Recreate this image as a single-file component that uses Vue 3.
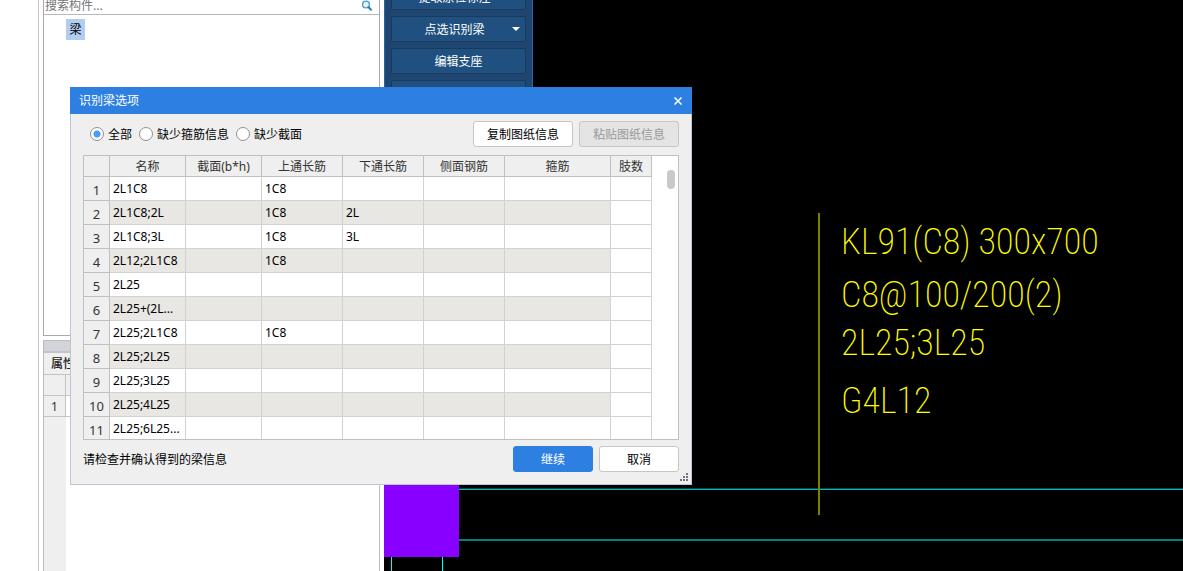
<script setup>
import { ref } from 'vue'

const tools = [
  { label: '提取原位标注', menu: true },
  { label: '点选识别梁', menu: true },
  { label: '编辑支座', menu: false },
  { label: '', menu: false }
]

const filters = [
  { value: 'all', label: '全部' },
  { value: 'stirrup', label: '缺少箍筋信息' },
  { value: 'section', label: '缺少截面' }
]
const filter = ref('all')

const columns = ['名称', '截面(b*h)', '上通长筋', '下通长筋', '侧面钢筋', '箍筋', '肢数']
const rows = [
  ['2L1C8', '', '1C8', '', '', '', ''],
  ['2L1C8;2L', '', '1C8', '2L', '', '', ''],
  ['2L1C8;3L', '', '1C8', '3L', '', '', ''],
  ['2L12;2L1C8', '', '1C8', '', '', '', ''],
  ['2L25', '', '', '', '', '', ''],
  ['2L25+(2L...', '', '', '', '', '', ''],
  ['2L25;2L1C8', '', '1C8', '', '', '', ''],
  ['2L25;2L25', '', '', '', '', '', ''],
  ['2L25;3L25', '', '', '', '', '', ''],
  ['2L25;4L25', '', '', '', '', '', ''],
  ['2L25;6L25...', '', '', '', '', '', '']
]
</script>

<template>
  <div class="app">
    <aside class="side">
      <section class="tree">
        <div class="search">
          <input type="text" placeholder="搜索构件..." aria-label="搜索构件" />
          <svg width="12" height="12" viewBox="0 0 12 12" aria-hidden="true">
            <circle cx="5" cy="4.5" r="3.4" fill="#e4f3fb" stroke="#4a9cc9" stroke-width="1.4" />
            <path d="M7.4 7 L10 9.8" stroke="#2f7fb5" stroke-width="2" stroke-linecap="round" />
          </svg>
        </div>
        <span class="node">梁</span>
      </section>
      <section class="props">
        <div class="splitter"></div>
        <h2>属性</h2>
        <div class="prop-row"><span></span></div>
        <div class="prop-row"><span>1</span></div>
        <div class="prop-fill"></div>
      </section>
    </aside>

    <main class="canvas">
      <nav class="tools">
        <button v-for="(t, i) in tools" :key="i" type="button" :class="{ split: t.menu }">
          {{ t.label }}
          <i v-if="t.menu" class="caret"></i>
        </button>
      </nav>
      <div class="column"></div>
      <div class="beam beam-top"></div>
      <div class="beam beam-bottom"></div>
      <div class="axis axis-a"></div>
      <div class="axis axis-b"></div>
      <div class="leader"></div>
      <p class="note note-1">KL91(C8) 300x700</p>
      <p class="note note-2">C8@100/200(2)</p>
      <p class="note note-3">2L25;3L25</p>
      <p class="note note-4">G4L12</p>
    </main>

    <div class="dialog" role="dialog" aria-labelledby="dialog-title">
      <header>
        <h1 id="dialog-title">识别梁选项</h1>
        <button type="button" aria-label="关闭">
          <svg width="10" height="8" viewBox="0 0 10 8" aria-hidden="true">
            <path d="M1.5 0.5 L8.5 7.5 M8.5 0.5 L1.5 7.5" stroke="#fff" stroke-width="1.5" />
          </svg>
        </button>
      </header>
      <div class="body">
        <div class="bar">
          <div class="filters">
            <label v-for="f in filters" :key="f.value">
              <input v-model="filter" type="radio" name="filter" :value="f.value" />
              <span>{{ f.label }}</span>
            </label>
          </div>
          <button type="button" class="btn wide">复制图纸信息</button>
          <button type="button" class="btn wide" disabled>粘贴图纸信息</button>
        </div>
        <div class="grid">
          <table>
            <colgroup>
              <col class="c-no" />
              <col class="c-name" />
              <col class="c-name" />
              <col class="c-bar" />
              <col class="c-bar" />
              <col class="c-bar" />
              <col class="c-hoop" />
              <col class="c-leg" />
            </colgroup>
            <thead>
              <tr>
                <th></th>
                <th v-for="c in columns" :key="c" scope="col">{{ c }}</th>
              </tr>
            </thead>
            <tbody>
              <tr v-for="(row, i) in rows" :key="i">
                <th scope="row">{{ i + 1 }}</th>
                <td v-for="(cell, j) in row" :key="j">{{ cell }}</td>
              </tr>
            </tbody>
          </table>
          <div class="track"><div class="thumb"></div></div>
        </div>
        <footer>
          <p>请检查并确认得到的梁信息</p>
          <button type="button" class="btn primary">继续</button>
          <button type="button" class="btn">取消</button>
        </footer>
      </div>
      <svg class="grip" width="8" height="8" viewBox="0 0 8 8" aria-hidden="true">
        <path d="M6 0h2v2h-2z M3 3h2v2h-2z M6 3h2v2h-2z M0 6h2v2h-2z M3 6h2v2h-2z M6 6h2v2h-2z" fill="#6f7480" />
      </svg>
    </div>
  </div>
</template>

<style>
body {
  margin: 0;
  background: #fff;
}
</style>

<style scoped>
.app {
  position: relative;
  display: flex;
  height: 100vh;
  overflow: hidden;
  font: 12px/16px "Noto Sans", "Noto Sans CJK SC", sans-serif;
  color: #000;
}
.app * {
  box-sizing: border-box;
}
button,
input {
  font: inherit;
  margin: 0;
}
h1,
h2,
p {
  margin: 0;
  font-size: 12px;
  font-weight: 400;
}

.side {
  flex: none;
  display: flex;
  flex-direction: column;
  width: 342px;
  margin-left: 38px;
  margin-right: 4px;
  padding-left: 4px;
  border-left: 1px solid #c4c4c8;
}
.tree {
  height: 336px;
  border: 1px solid #a9a9ab;
  border-top: 0;
}
.search {
  display: flex;
  align-items: flex-end;
  height: 15px;
  padding-right: 6px;
  border-bottom: 1px solid #b9b9bb;
}
.search input {
  flex: 1;
  min-width: 0;
  height: 18px;
  padding: 0 1px;
  border: 0;
  outline: 0;
  background: none;
}
.search input::placeholder {
  color: #757575;
  opacity: 1;
}
.search svg {
  margin-bottom: 2px;
}
.node {
  display: block;
  width: 19px;
  margin: 4px 22px;
  line-height: 21px;
  text-align: center;
  background: #b1cdf0;
}
.props {
  flex: 1;
  display: flex;
  flex-direction: column;
  margin-top: 4px;
  border: 1px solid #bcbcc0;
  border-bottom: 0;
}
.splitter {
  height: 12px;
  background: #d3d4da;
  border-bottom: 2px solid #c3c4ca;
}
.props h2 {
  height: 22px;
  padding-left: 7px;
  line-height: 21px;
  font-weight: 500;
  color: #222;
  background: #efefef;
  border-bottom: 1px solid #c4c4c4;
}
.prop-row {
  height: 21px;
  border-bottom: 1px solid #c4c4c4;
}
.prop-row span {
  display: block;
  width: 22px;
  height: 20px;
  line-height: 21px;
  text-align: center;
  color: #333;
  background: #efefef;
  border-right: 1px solid #c4c4c4;
}
.props h2 + .prop-row {
  background: #efefef;
}
.prop-fill {
  flex: 1;
  width: 22px;
  background: #efefef;
}

.canvas {
  position: relative;
  flex: 1;
  min-width: 0;
  overflow: hidden;
  background: #000;
}
.tools {
  display: flex;
  flex-direction: column;
  gap: 6px;
  width: 149px;
  margin-top: -16px;
  padding: 0 6px 6px;
  background: #1e4670;
  border: solid #2766a6;
  border-width: 0 1px;
}
.tools button {
  position: relative;
  height: 26px;
  padding: 2px 0 0;
  color: #fff;
  background: #205080;
  border: 1px solid #183a5e;
  border-radius: 2px;
}
.tools .split {
  padding-right: 8px;
}
.caret {
  position: absolute;
  top: 10px;
  right: 5px;
  border: 4px solid transparent;
  border-top-color: #fff;
  border-bottom: 0;
}
.column {
  position: absolute;
  left: 0;
  top: 480px;
  width: 75px;
  height: 77px;
  background: #8800ff;
}
.beam {
  position: absolute;
  left: 75px;
  right: 0;
  height: 2px;
}
.beam-top {
  top: 488px;
  background: linear-gradient(#004444 50%, #00bbbb 50%);
}
.beam-bottom {
  top: 539px;
  background: #008080;
}
.axis {
  position: absolute;
  top: 557px;
  bottom: 0;
  width: 1px;
  background: #00ffff;
}
.axis-a {
  left: 7px;
}
.axis-b {
  left: 58px;
}
.leader {
  position: absolute;
  left: 434px;
  top: 213px;
  width: 2px;
  height: 302px;
  background: #808000;
}
.note {
  position: absolute;
  left: 457px;
  font: 200 36px/48px "Roboto Condensed", "Liberation Sans Narrow", Roboto, sans-serif;
  white-space: nowrap;
  color: #ffff00;
}
.note-1 {
  top: 218px;
}
.note-2 {
  top: 271px;
}
.note-3 {
  top: 319px;
}
.note-4 {
  top: 377px;
}

.dialog {
  position: absolute;
  left: 70px;
  top: 87px;
  width: 622px;
}
.dialog header {
  display: flex;
  align-items: center;
  justify-content: space-between;
  height: 27px;
  padding: 0 9px;
  color: #fff;
  background: #2d7fe2;
}
.dialog header button {
  display: flex;
  padding: 0;
  border: 0;
  background: none;
}
.body {
  padding: 7px 12px 12px;
  background: #efefef;
  border: 1px solid #bfc5d6;
  border-top: 0;
}
.bar,
footer {
  display: flex;
  align-items: center;
  gap: 6px;
}
.filters {
  flex: 1;
  display: flex;
  gap: 7px;
  padding-left: 7px;
}
.filters label {
  display: flex;
  align-items: center;
  gap: 4px;
}
.filters span,
footer p {
  padding-top: 2px;
}
.filters input {
  appearance: none;
  width: 14px;
  height: 14px;
  border: 1px solid #8f8f8f;
  border-radius: 50%;
  background: #fff;
}
.filters input:checked {
  background: radial-gradient(circle, #4a9bf5 0 3px, #fff 4px);
}
.btn {
  width: 80px;
  height: 26px;
  padding: 2px 0 0;
  color: #000;
  background: #fff;
  border: 1px solid #c6c6c6;
  border-radius: 3px;
}
.wide {
  width: 100px;
}
.btn:disabled {
  color: #999;
  background: #e4e4e4;
}
.primary {
  color: #fff;
  background: #2d7fe2;
  border-color: #2d7fe2;
}
.grid {
  display: flex;
  height: 285px;
  margin: 8px 0 6px;
  overflow: hidden;
  background: #fff;
  border: 1px solid #c0c0c0;
}
table {
  flex: none;
  width: 568px;
  table-layout: fixed;
  border-collapse: separate;
  border-spacing: 0;
}
.c-no {
  width: 26px;
}
.c-name {
  width: 76px;
}
.c-bar {
  width: 81px;
}
.c-hoop {
  width: 106px;
}
.c-leg {
  width: 41px;
}
th,
td {
  height: 24px;
  padding: 0 3px;
  font-weight: 400;
  line-height: 20px;
  text-align: left;
  white-space: nowrap;
  border: solid #d2d2d2;
  border-width: 0 1px 1px 0;
}
th {
  padding: 2px 0 0;
  line-height: 18px;
  text-align: center;
  color: #333;
  background: #efefef;
  border-color: #c0c0c0;
}
thead th {
  height: 21px;
}
tbody th {
  font-size: 13px;
}
tbody tr:nth-child(even) td:not(:last-child) {
  background: #e8e7e3;
}
.track {
  flex: 1;
  display: flex;
  justify-content: flex-end;
  padding: 14px 3px 0 0;
}
.thumb {
  width: 8px;
  height: 19px;
  border-radius: 4px;
  background: #c9c9c9;
}
footer p {
  flex: 1;
}
.grip {
  position: absolute;
  right: 4px;
  bottom: 4px;
}
</style>
